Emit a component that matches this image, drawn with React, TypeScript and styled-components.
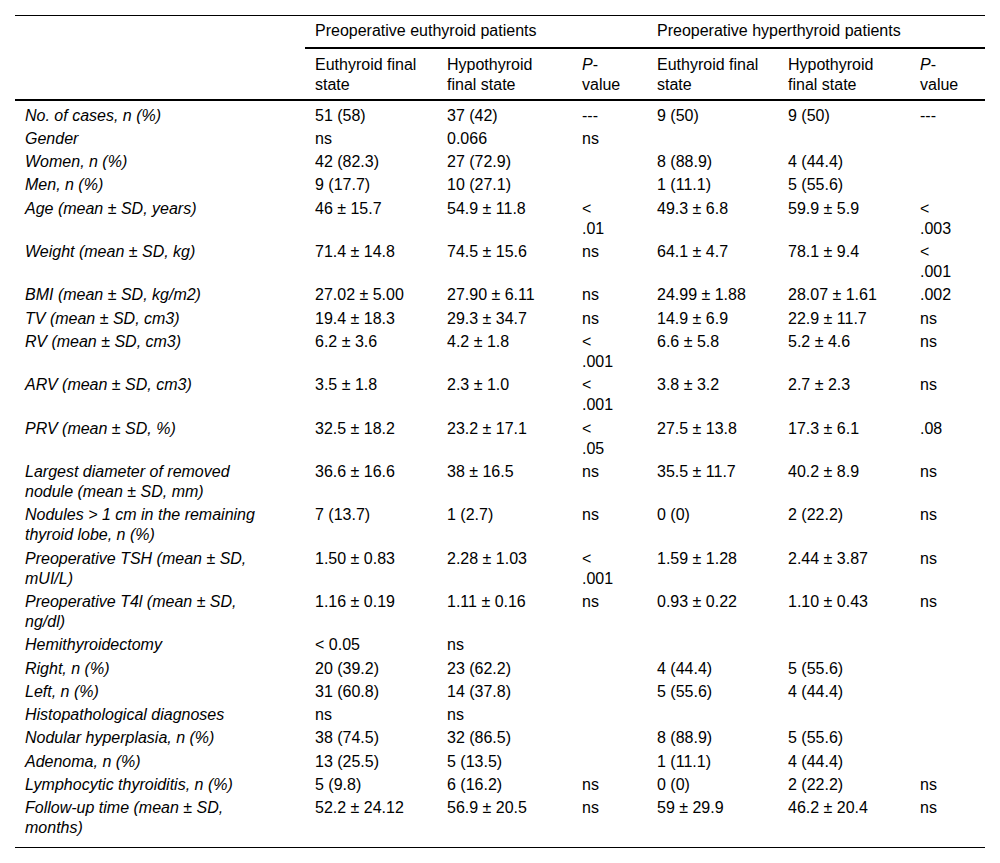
import React from "react";
import styled, { createGlobalStyle, css } from "styled-components";

const GlobalStyle = createGlobalStyle`
  html, body {
    margin: 0;
    padding: 0;
    background: #ffffff;
  }
  body {
    font-family: "Liberation Sans", Arial, Helvetica, sans-serif;
    color: #000;
  }
`;

const Page = styled.div`
  padding: 15px 15px 0 15px;
  background: #fff;
`;

const Table = styled.table`
  width: 970px;
  table-layout: fixed;
  border-collapse: separate;
  border-spacing: 0;
  border-top: 1px solid #000;
  font-size: 16px;
  line-height: 20px;
  color: #000;
`;

type CellKind = "label" | "value" | "p";

const padRight = (kind: CellKind) =>
  kind === "label" ? "40px" : kind === "p" ? "32px" : "12px";

const GroupTh = styled.th`
  text-align: left;
  font-weight: normal;
  vertical-align: top;
  padding: 5px 12px 6px 10px;
  border-bottom: 2px solid #000;
  white-space: nowrap;
`;

const CornerTh = styled.th`
  border-bottom: 2px solid #000;
  padding: 0;
`;

const ColTh = styled.th<{ $kind: CellKind }>`
  text-align: left;
  font-weight: normal;
  vertical-align: top;
  padding: 6px ${(p) => padRight(p.$kind)} 4px 10px;
  border-bottom: 2px solid #000;
  overflow: visible;
`;

const Row = styled.tr<{ $first?: boolean; $last?: boolean }>`
  & > td {
    padding-top: ${(p) => (p.$first ? "4.5px" : "1.667px")};
    padding-bottom: ${(p) => (p.$last ? "8.2px" : "1.667px")};
    border-bottom: ${(p) => (p.$last ? "1px solid #000" : "none")};
  }
`;

const Td = styled.td<{ $kind: CellKind }>`
  text-align: left;
  vertical-align: top;
  padding-left: 10px;
  padding-right: ${(p) => padRight(p.$kind)};
  overflow: visible;
  ${(p) =>
    p.$kind === "label" &&
    css`
      font-style: italic;
    `}
`;

const Italic = styled.i`
  font-style: italic;
`;

type DataRow = [string, string, string, string, string, string, string];

const rows: DataRow[] = [
  ["No. of cases, n (%)", "51 (58)", "37 (42)", "---", "9 (50)", "9 (50)", "---"],
  ["Gender", "ns", "0.066", "ns", "", "", ""],
  ["Women, n (%)", "42 (82.3)", "27 (72.9)", "", "8 (88.9)", "4 (44.4)", ""],
  ["Men, n (%)", "9 (17.7)", "10 (27.1)", "", "1 (11.1)", "5 (55.6)", ""],
  ["Age (mean ± SD, years)", "46 ± 15.7", "54.9 ± 11.8", "< .01", "49.3 ± 6.8", "59.9 ± 5.9", "< .003"],
  ["Weight (mean ± SD, kg)", "71.4 ± 14.8", "74.5 ± 15.6", "ns", "64.1 ± 4.7", "78.1 ± 9.4", "< .001"],
  ["BMI (mean ± SD, kg/m2)", "27.02 ± 5.00", "27.90 ± 6.11", "ns", "24.99 ± 1.88", "28.07 ± 1.61", ".002"],
  ["TV (mean ± SD, cm3)", "19.4 ± 18.3", "29.3 ± 34.7", "ns", "14.9 ± 6.9", "22.9 ± 11.7", "ns"],
  ["RV (mean ± SD, cm3)", "6.2 ± 3.6", "4.2 ± 1.8", "< .001", "6.6 ± 5.8", "5.2 ± 4.6", "ns"],
  ["ARV (mean ± SD, cm3)", "3.5 ± 1.8", "2.3 ± 1.0", "< .001", "3.8 ± 3.2", "2.7 ± 2.3", "ns"],
  ["PRV (mean ± SD, %)", "32.5 ± 18.2", "23.2 ± 17.1", "< .05", "27.5 ± 13.8", "17.3 ± 6.1", ".08"],
  ["Largest diameter of removed nodule (mean ± SD, mm)", "36.6 ± 16.6", "38 ± 16.5", "ns", "35.5 ± 11.7", "40.2 ± 8.9", "ns"],
  ["Nodules > 1 cm in the remaining thyroid lobe, n (%)", "7 (13.7)", "1 (2.7)", "ns", "0 (0)", "2 (22.2)", "ns"],
  ["Preoperative TSH (mean ± SD, mUI/L)", "1.50 ± 0.83", "2.28 ± 1.03", "< .001", "1.59 ± 1.28", "2.44 ± 3.87", "ns"],
  ["Preoperative T4l (mean ± SD, ng/dl)", "1.16 ± 0.19", "1.11 ± 0.16", "ns", "0.93 ± 0.22", "1.10 ± 0.43", "ns"],
  ["Hemithyroidectomy", "< 0.05", "ns", "", "", "", ""],
  ["Right, n (%)", "20 (39.2)", "23 (62.2)", "", "4 (44.4)", "5 (55.6)", ""],
  ["Left, n (%)", "31 (60.8)", "14 (37.8)", "", "5 (55.6)", "4 (44.4)", ""],
  ["Histopathological diagnoses", "ns", "ns", "", "", "", ""],
  ["Nodular hyperplasia, n (%)", "38 (74.5)", "32 (86.5)", "", "8 (88.9)", "5 (55.6)", ""],
  ["Adenoma, n (%)", "13 (25.5)", "5 (13.5)", "", "1 (11.1)", "4 (44.4)", ""],
  ["Lymphocytic thyroiditis, n (%)", "5 (9.8)", "6 (16.2)", "ns", "0 (0)", "2 (22.2)", "ns"],
  ["Follow-up time (mean ± SD, months)", "52.2 ± 24.12", "56.9 ± 20.5", "ns", "59 ± 29.9", "46.2 ± 20.4", "ns"],
];

const colWidths = [290, 132, 135, 75, 131, 132, 75];
const kinds: CellKind[] = ["label", "value", "value", "p", "value", "value", "p"];

const PValueHead = () => (
  <>
    <Italic>P</Italic>-value
  </>
);

export default function App() {
  return (
    <>
      <GlobalStyle />
      <Page>
        <Table>
          <colgroup>
            {colWidths.map((w, i) => (
              <col key={i} style={{ width: `${w}px` }} />
            ))}
          </colgroup>
          <thead>
            <tr>
              <CornerTh rowSpan={2} />
              <GroupTh colSpan={3}>Preoperative euthyroid patients</GroupTh>
              <GroupTh colSpan={3}>Preoperative hyperthyroid patients</GroupTh>
            </tr>
            <tr>
              <ColTh $kind="value">Euthyroid final state</ColTh>
              <ColTh $kind="value">Hypothyroid final state</ColTh>
              <ColTh $kind="p">
                <PValueHead />
              </ColTh>
              <ColTh $kind="value">Euthyroid final state</ColTh>
              <ColTh $kind="value">Hypothyroid final state</ColTh>
              <ColTh $kind="p">
                <PValueHead />
              </ColTh>
            </tr>
          </thead>
          <tbody>
            {rows.map((r, i) => (
              <Row key={i} $first={i === 0} $last={i === rows.length - 1}>
                {r.map((c, j) => (
                  <Td key={j} $kind={kinds[j]}>
                    {c}
                  </Td>
                ))}
              </Row>
            ))}
          </tbody>
        </Table>
      </Page>
    </>
  );
}
